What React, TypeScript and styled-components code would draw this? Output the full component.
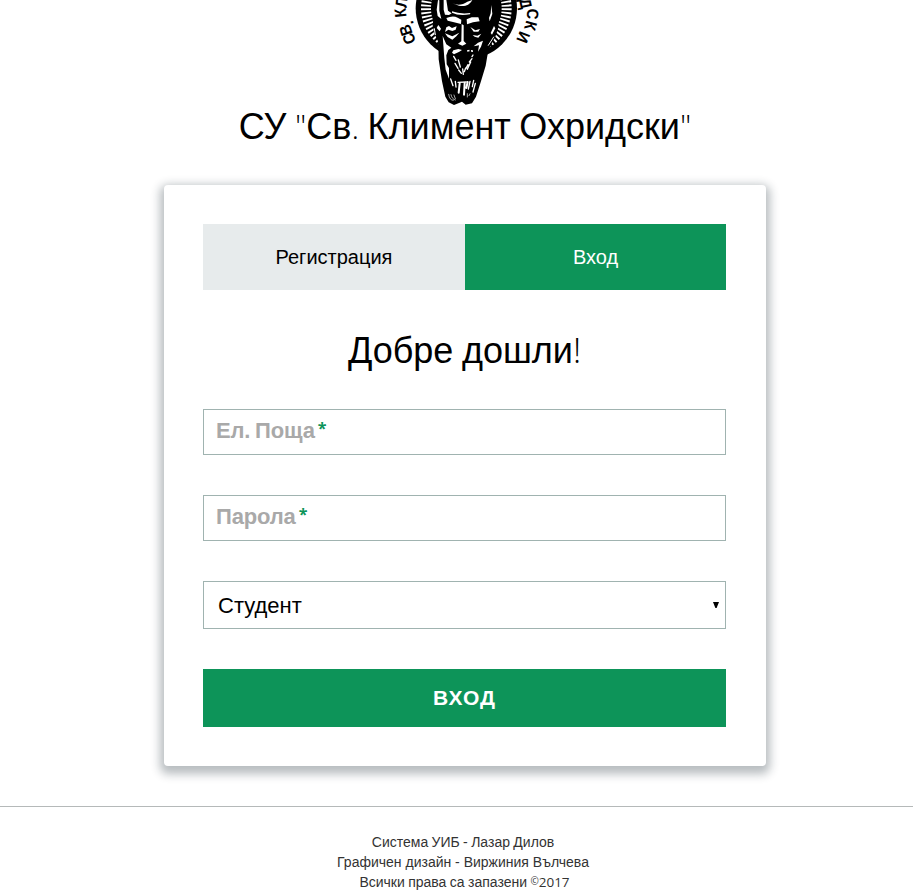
import React from "react";
import styled, { createGlobalStyle } from "styled-components";

const GlobalStyle = createGlobalStyle`
  *, *::before, *::after { box-sizing: border-box; }
  body {
    margin: 0;
    background: #fff;
    color: #000;
    font-family: "Liberation Sans", Arial, sans-serif;
    overflow: hidden;
  }
`;

const Page = styled.div`
  width: 930px;
  height: 892px;
  overflow: hidden;
  display: flex;
  flex-direction: column;
`;

const Header = styled.header`
  height: 185px;
  flex: none;
  display: flex;
  flex-direction: column;
  align-items: center;
`;

const Seal = styled.svg`
  display: block;
  width: 160px;
  height: 105px;
  flex: none;
`;

const Title = styled.h1`
  margin: 0;
  font-size: 36px;
  line-height: 44px;
  font-weight: 400;
  text-align: center;
  white-space: nowrap;
  word-spacing: -1.5px;
`;

const Light = styled.span<{ $size?: number; $raise?: number; $weight?: number }>`
  font-family: "Open Sans", sans-serif;
  font-weight: ${(p) => p.$weight || 300};
  font-size: ${(p) => (p.$size ? `${p.$size}px` : "inherit")};
  vertical-align: ${(p) => p.$raise || 0}px;
  line-height: 1;
`;

const Card = styled.main`
  width: 602px;
  height: 581px;
  flex: none;
  margin-left: 164px;
  padding: 39px 40px 39px 39px;
  border-radius: 4px;
  background: #fff;
  box-shadow: 0 4px 10px 4px rgba(19, 35, 47, 0.3);
`;

const Tabs = styled.div`
  display: grid;
  grid-template-columns: 262px 261px;
  height: 66px;
`;

const Tab = styled.button<{ $active?: boolean }>`
  border: 0;
  padding: 0;
  font: 400 20px/32px "Liberation Sans", Arial, sans-serif;
  color: ${(p) => (p.$active ? "#fff" : "#000")};
  background: ${(p) => (p.$active ? "#0d9459" : "#e7ebec")};
`;

const Welcome = styled(Title).attrs({ as: "h2" })`
  height: 119px;
  padding-top: 39px;
`;

const Form = styled.form`
  display: flex;
  flex-direction: column;
  gap: 40px;
`;

const Field = styled.label`
  height: 46px;
  padding: 0 12px;
  border: 1px solid #a0b3b0;
  font-size: 22px;
  line-height: 42px;
  font-weight: 700;
  letter-spacing: -0.15px;
  word-spacing: -1.2px;
  color: #a9a9a9;
`;

const Required = styled.span`
  margin-left: 3px;
  color: #0d9459;
  font: 700 16px/1 "Open Sans", sans-serif;
  vertical-align: 4px;
`;

const Select = styled.div`
  height: 48px;
  padding: 1px 6px 0 14px;
  border: 1px solid #a0b3b0;
  display: flex;
  align-items: center;
  justify-content: space-between;
  font-size: 22px;
`;

const Arrow = styled.svg`
  width: 6px;
  height: 6px;
  margin-bottom: 1px;
`;

const Submit = styled.button`
  height: 58px;
  padding: 0;
  border: 0;
  background: #0d9459;
  color: #fff;
  font: 700 21px/58px "Liberation Sans", Arial, sans-serif;
  letter-spacing: 1px;
`;

const Footer = styled.footer`
  margin-top: 40px;
  padding: 25px 4px 0 0;
  border-top: 1px solid #b5b9b9;
  color: #333;
  font-size: 14px;
  line-height: 20px;
  text-align: center;
`;

const Line = styled.div<{ $shift?: number; $gap?: number }>`
  height: 20px;
  padding-left: ${(p) => p.$shift || 0}px;
  word-spacing: ${(p) => p.$gap || 0}px;
`;

const letters: [string, number, number, number][] = [
  ["С", 72, 116, -112],
  ["В", 62, 91, -108],
  [".", 68, 70, -104],
  ["К", 46, 39, -96],
  ["Л", 49, 7, -84],
  ["Д", 422, 10, 78],
  ["С", 443, 42, 95],
  ["К", 437, 77, 106],
  ["И", 415, 112, 112],
];

function UniversitySeal() {
  return (
    <Seal viewBox="0 0 480 315" aria-label="Св. Климент Охридски">
      <circle cx="244" cy="25" r="152" />
      <circle cx="244" cy="25" r="121" fill="none" stroke="#fff" strokeWidth="30" strokeDasharray="5.5 5.5" />
      <circle cx="244" cy="25" r="101" />
      <path d="M150 0L143 78L149 103L160 126L161 178L171 244L181 290L191 307L207 315L222 309L231 305L242 314L261 310L273 290L287 247L302 197L310 150L331 110L341 80L335 0Z" />
      <g fill="#fff">
        <path d="M176 0L184 0L189 32L200 40L192 45L180 44L176 29Z" />
        <path d="M202 10C218 17 233 15 247 5L262 0C253 17 239 20 222 17Z" />
        <path d="M201 34Q225 43 256 39L255 43Q222 49 201 38Z" />
        <path d="M184 54Q204 45 218 53L229 59L228 72L204 66L188 62Z" />
        <path d="M245 58L260 52L280 52L284 64L264 67L246 73Z" />
        <path d="M230 72L236 76L236 123L244 131L232 137L219 131L229 124Z" />
        <path d="M160 75L168 86L164 94L155 84Z" />
        <path d="M184 82L192 78L201 84L215 79L212 89L202 93L190 89L180 96Z" />
        <path d="M180 100L202 109L223 98L214 109L202 119L188 111Z" />
        <path d="M256 81L271 91L285 87L280 95L266 95ZM263 105L277 107L289 101L280 113L269 110Z" />
        <path d="M173 108L184 133L199 143L190 150L184 166L185 193L192 204L192 236L182 209L178 175Z" />
        <path d="M294 122L279 128L266 139L282 136L279 155L288 140ZM312 54L317 40L319 15L322 42L314 64ZM327 78L331 85L321 104L317 99Z" />
        <path d="M205 151L220 147L231 150L223 155L207 163L201 158ZM246 151L253 149L254 154L247 155ZM258 150L263 150L264 156L259 156Z" />
        <path d="M159 0L163 1L163 32L169 57L158 48L155 29Z" />
      </g>
      <g fill="none" stroke="#fff" strokeWidth="4" strokeLinecap="round">
        <path d="M206 169L213 181M210 190L219 205M220 180L226 201M221 210L229 220M233 207L235 223M242 204L238 215M249 194L243 205M257 186L247 208M261 176L253 186M264 165L261 170" />
        <path d="M197 237L204 257M211 244L213 261M266 241L262 260M255 244L250 267M271 250L264 276" />
        <path d="M191 283Q194 302 205 301M198 284Q201 298 211 300M207 285L211 296M247 281L247 291M255 281L252 287" strokeWidth="2" />
        <path d="M224 250L221 278M239 249L237 284M248 246L244 264" strokeWidth="6" />
        <path d="M219 247L244 246" strokeWidth="4" />
        <path d="M148 86L151 104M326 111L310 136" strokeWidth="3" />
      </g>
      <g fontFamily="Liberation Sans, sans-serif" fontWeight="700" fontSize="49" textAnchor="middle">
        {letters.map(([char, x, y, angle], i) => (
          <text key={i} transform={`translate(${x} ${y}) rotate(${angle}) scale(.9 1)`} y="17">
            {char}
          </text>
        ))}
      </g>
    </Seal>
  );
}

export default function App() {
  return (
    <>
      <GlobalStyle />
      <Page>
        <Header>
          <UniversitySeal />
          <Title>
            СУ <Light $size={32} $raise={2}>"</Light>Св<Light $size={32}>.</Light> Климент Охридски
            <Light $size={32} $raise={2}>"</Light>
          </Title>
        </Header>
        <Card>
          <Tabs>
            <Tab>Регистрация</Tab>
            <Tab $active>Вход</Tab>
          </Tabs>
          <Welcome>
            Добре дошли<Light $size={34}>!</Light>
          </Welcome>
          <Form>
            <Field>Ел. Поща<Required>*</Required></Field>
            <Field>Парола<Required>*</Required></Field>
            <Select>
              Студент
              <Arrow viewBox="0 0 6 6"><path d="M0 0H6L3.6 6H2.4Z" /></Arrow>
            </Select>
            <Submit type="button">ВХОД</Submit>
          </Form>
        </Card>
        <Footer>
          <Line $gap={-0.5}>Система УИБ - Лазар Дилов</Line>
          <Line>Графичен дизайн - Виржиния Вълчева</Line>
          <Line $shift={3} $gap={-0.5}>
            Всички права са запазени <Light $size={10} $raise={2} $weight={400}>©</Light>
            <Light $size={13.5} $weight={400}>2017</Light>
          </Line>
        </Footer>
      </Page>
    </>
  );
}
